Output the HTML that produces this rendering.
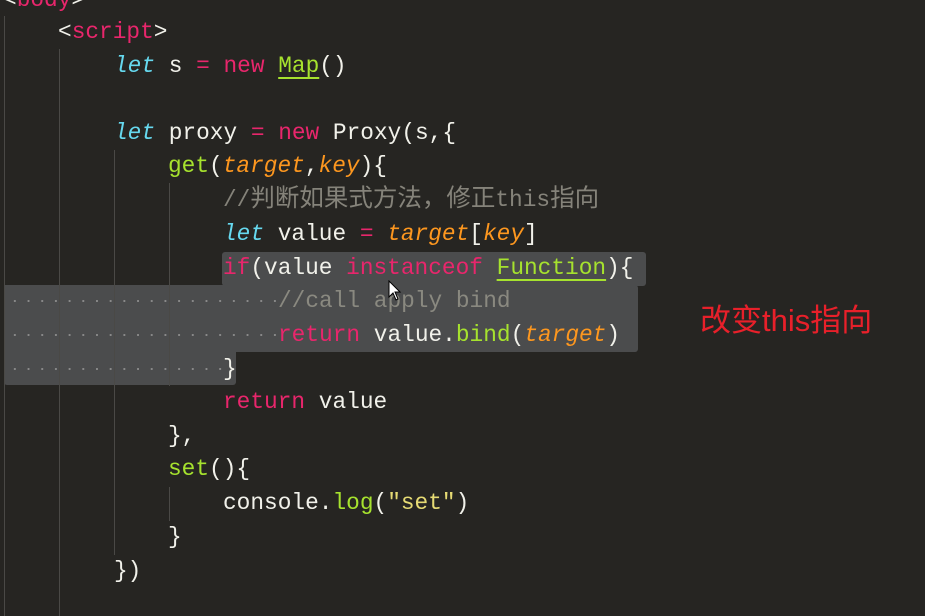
<!DOCTYPE html>
<html><head><meta charset="utf-8"><style>
body{margin:0;width:925px;height:616px;background:#262522;overflow:hidden;position:relative;font-family:"Liberation Mono","Noto Sans CJK SC",monospace;font-size:22.8px;color:#f1f1ea}
.g{position:absolute;width:1px;background:#4a4946}
.sel{position:absolute;background:#4b4c4d;border-radius:3px}
.l{position:absolute;left:0;height:34px;line-height:34px;white-space:pre}
.p{color:#e8266c}.gr{color:#a6e22e}.c{color:#66d9ef;font-style:italic}.o{color:#fd971f;font-style:italic}.cm{color:#85837a}.cm2{color:#8a8980}.y{color:#e6db74}
.u{text-decoration:underline;text-decoration-color:#a6e22e;text-underline-offset:5px;text-decoration-thickness:2px}
.cjk{font-size:24.5px}
.dots{position:absolute;left:8px;height:2px;background-image:radial-gradient(circle,#8a8a8a 1px,transparent 1.2px);background-size:13.7px 2px}
</style></head><body>
<div class="sel" style="left:222px;top:252px;width:424px;height:34px"></div>
<div class="sel" style="left:4px;top:285px;width:518px;height:34px;border-radius:0"></div>
<div class="sel" style="left:222px;top:285px;width:416px;height:67px;border-radius:0 3px 3px 0"></div>
<div class="sel" style="left:4px;top:318px;width:232px;height:67px;border-radius:0 0 3px 3px"></div>
<div class="dots" style="top:300px;width:270px"></div>
<div class="dots" style="top:334px;width:270px"></div>
<div class="dots" style="top:368px;width:215px"></div>
<div class="g" style="left:4px;top:16px;height:600px"></div>
<div class="g" style="left:59px;top:49px;height:567px"></div>
<div class="g" style="left:114px;top:150px;height:405px"></div>
<div class="g" style="left:169px;top:183px;height:203px"></div>
<div class="g" style="left:169px;top:487px;height:34px"></div>
<div class="l" style="top:-17px;left:3px"><span style="color:#f1f1ea">&lt;</span><span class="p">body</span>&gt;</div>
<div class="l" style="top:15px;left:58px">&lt;<span class="p">script</span>&gt;</div>
<div class="l" style="top:49px;left:114px"><span class="c">let</span> s <span class="p">=</span> <span class="p">new</span> <span class="gr u">Map</span>()</div>
<div class="l" style="top:116px;left:114px"><span class="c">let</span> proxy <span class="p">=</span> <span class="p">new</span> Proxy(s,{</div>
<div class="l" style="top:149px;left:168px"><span class="gr">get</span>(<span class="o">target</span>,<span class="o">key</span>){</div>
<div class="l cm" style="top:183px;left:223px">//<span class="cjk">判断如果式方法，修正</span>this<span class="cjk">指向</span></div>
<div class="l" style="top:217px;left:223px"><span class="c">let</span> value <span class="p">=</span> <span class="o">target</span>[<span class="o">key</span>]</div>
<div class="l" style="top:251px;left:223px"><span class="p">if</span>(value <span class="p">instanceof</span> <span class="gr u">Function</span>){</div>
<div class="l cm2" style="top:284px;left:278px">//call apply bind</div>
<div class="l" style="top:318px;left:278px"><span class="p">return</span> value.<span class="gr">bind</span>(<span class="o">target</span>)</div>
<div class="l" style="top:352px;left:223px">}</div>
<div class="l" style="top:385px;left:223px"><span class="p">return</span> value</div>
<div class="l" style="top:419px;left:168px">},</div>
<div class="l" style="top:452px;left:168px"><span class="gr">set</span>(){</div>
<div class="l" style="top:486px;left:223px">console.<span class="gr">log</span>(<span class="y">"set"</span>)</div>
<div class="l" style="top:520px;left:168px">}</div>
<div class="l" style="top:554px;left:114px">})</div>
<svg style="position:absolute;left:388px;top:280px" width="14" height="22" viewBox="0 0 14 22"><path d="M1 1 L1 17 L5 13 L8 20 L10 19 L7 12 L12 12 Z" fill="#fff" stroke="#000" stroke-width="1"/></svg>
<div style="position:absolute;left:700px;top:301px;font-family:'Liberation Sans','Noto Sans CJK SC',sans-serif;font-size:31px;color:#e8202a;line-height:40px">改变this指向</div>
</body></html>
